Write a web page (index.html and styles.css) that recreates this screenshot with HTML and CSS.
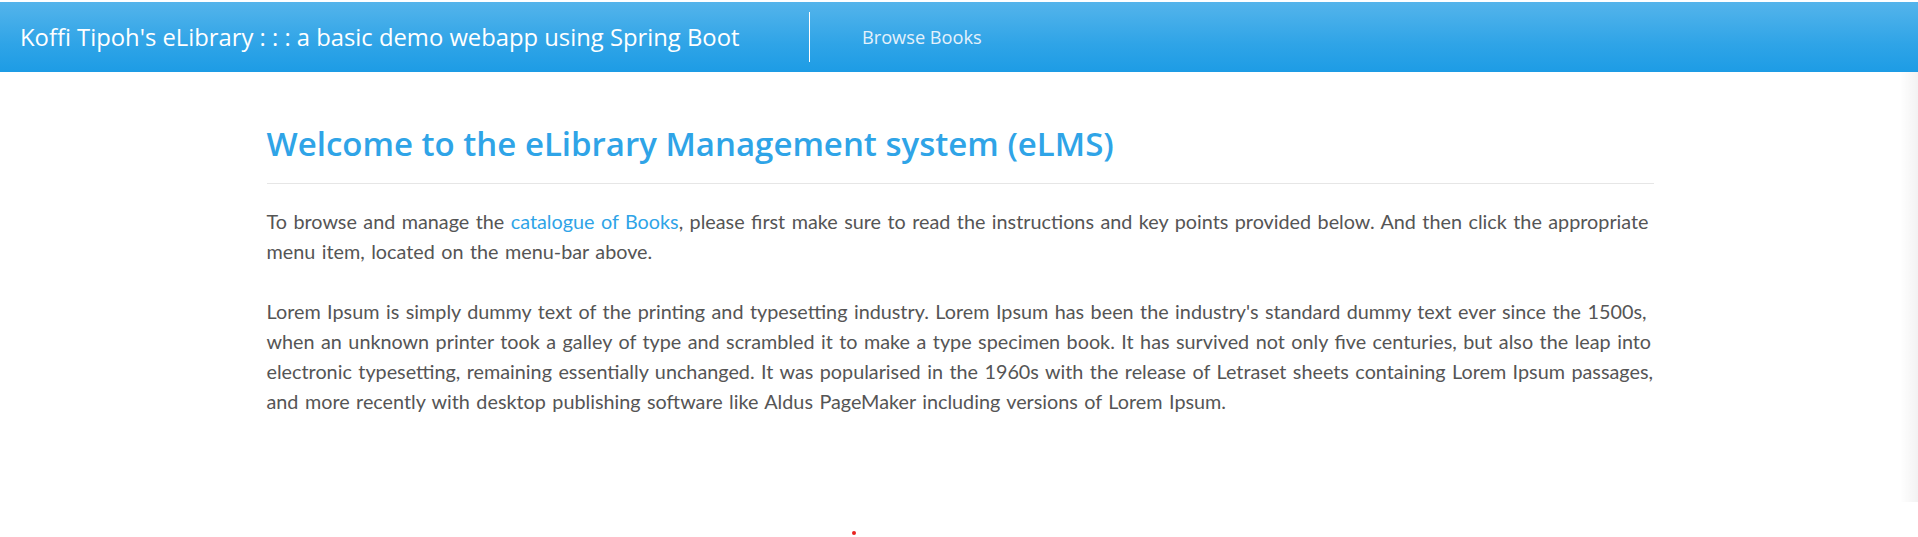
FILE: index.html
```html
<!DOCTYPE html>
<html lang="en">
<head>
<meta charset="utf-8">
<title>eLibrary</title>
<link rel="stylesheet" href="styles.css">
</head>
<body>
<nav class="navbar">
  <a class="brand" href="#">Koffi Tipoh's eLibrary : : : a basic demo webapp using Spring Boot</a>
  <span class="divider"></span>
  <a class="nav-link" href="#">Browse Books</a>
</nav>
<main class="content">
  <h1 class="title">Welcome to the eLibrary Management system (eLMS)</h1>
  <hr class="rule">
  <p class="text">To browse and manage the <a class="link" href="#">catalogue of Books</a>, please first make sure to read the instructions and key points provided below. And then click the appropriate menu item, located on the menu-bar above.</p>
  <p class="text">Lorem Ipsum is simply dummy text of the printing and typesetting industry. Lorem Ipsum has been the industry's standard dummy text ever since the 1500s, when an unknown printer took a galley of type and scrambled it to make a type specimen book. It has survived not only five centuries, but also the leap into electronic typesetting, remaining essentially unchanged. It was popularised in the 1960s with the release of Letraset sheets containing Lorem Ipsum passages, and more recently with desktop publishing software like Aldus PageMaker including versions of Lorem Ipsum.</p>
</main>
<div class="edge-shade"></div>
<div class="red-dot"></div>
</body>
</html>
```
FILE: styles.css
```css
html, body {
  margin: 0;
  padding: 0;
  background: #ffffff;
}
body {
  padding-top: 2px;
  font-family: "Open Sans", "Noto Sans", "Liberation Sans", sans-serif;
  color: #555555;
}
.navbar {
  height: 70px;
  display: flex;
  align-items: center;
  background-image: linear-gradient(#54b4eb, #2fa4e7 60%, #1d9ce5);
}
.brand {
  padding-left: 20px;
  font-size: 23.8px;
  color: #ffffff;
  text-decoration: none;
  width: 719px;
  white-space: nowrap;
}
.divider {
  width: 1px;
  height: 50px;
  background: #ffffff;
  margin-left: 70px;
}
.nav-link {
  margin-left: 52px;
  font-size: 18.2px;
  color: #e4f1fb;
  text-decoration: none;
}
.content {
  width: 1387px;
  margin: 0 auto;
  padding-top: 52px;
  transform: translateX(1px);
}
.title {
  margin: 0;
  font-size: 33px;
  line-height: 40px;
  font-weight: 600;
  color: #2fa4e7;
}
.rule {
  margin: 19px 0 22px;
  border: 0;
  border-top: 1px solid #e6e6e6;
  height: 0;
}
.text {
  margin: 0 0 30px;
  font-family: "Lato", "Open Sans", sans-serif;
  font-size: 19.8px;
  line-height: 30px;
  word-spacing: 1.4px;
}
.link {
  color: #2fa4e7;
  text-decoration: none;
}
.edge-shade {
  position: absolute;
  right: 0;
  top: 72px;
  width: 18px;
  height: 430px;
  background: linear-gradient(to right, rgba(0,0,0,0), rgba(0,0,0,0.05));
}
.red-dot {
  position: absolute;
  left: 852px;
  top: 531px;
  width: 4px;
  height: 4px;
  border-radius: 50%;
  background: #e8221f;
}
```
